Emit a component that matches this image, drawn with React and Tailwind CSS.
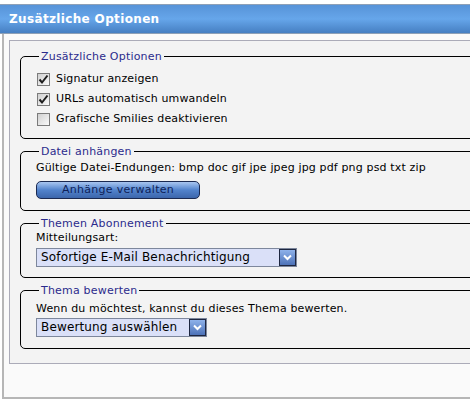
import React from 'react';

const font = { fontFamily: '"DejaVu Sans", Verdana, sans-serif' };

function Checkbox({ checked }) {
  return (
    <span className="flex h-[13px] w-[13px] items-center justify-center border border-[#7b7b7b] bg-gradient-to-br from-[#d0d0d0] to-[#fafafa]">
      {checked && (
        <svg width="11" height="11" viewBox="0 0 11 11">
          <path d="M1.5 5.5 L4 8.5 L9.5 1.5" fill="none" stroke="#202020" strokeWidth="2" />
        </svg>
      )}
    </span>
  );
}

function SelectBox({ label, width }) {
  return (
    <div className={`flex h-[19px] items-stretch border border-[#7d879c] bg-[#dae0f8] ${width}`}>
      <span className="flex-1 pl-[4px] text-[12px] leading-[17px] tracking-[0.15px] text-black">{label}</span>
      <span className="flex w-[17px] items-center justify-center border border-[#1d2640] bg-gradient-to-b from-[#8fb2ea] to-[#4d72b8]">
        <svg width="9" height="7" viewBox="0 0 9 7">
          <path d="M1 1.5 L4.5 5 L8 1.5" fill="none" stroke="#ffffff" strokeWidth="2" />
        </svg>
      </span>
    </div>
  );
}

function Group({ title, children, className = '' }) {
  return (
    <fieldset className={`rounded-[5px] border border-black pl-[15px] ${className}`}>
      <legend className="ml-[3px] px-[2px] text-[11px] leading-[13px] tracking-[0.2px] text-[#2b2b8c]">{title}</legend>
      {children}
    </fieldset>
  );
}

export default function App() {
  const options = [
    { label: 'Signatur anzeigen', checked: true },
    { label: 'URLs automatisch umwandeln', checked: true },
    { label: 'Grafische Smilies deaktivieren', checked: false },
  ];

  return (
    <div className="h-[403px] w-[470px] overflow-hidden bg-white pt-[4px] text-[11px] tracking-[0.15px] text-black" style={font}>
      {/* Header bar */}
      <div className="flex h-[30px] w-[490px] items-center border-y border-[#8ea0b6] bg-gradient-to-b from-[#5793d8] via-[#66a6ea] to-[#467fc2] pl-[9px]">
        <span className="text-[12px] font-bold tracking-[0.35px] text-white">Zusätzliche Optionen</span>
      </div>

      {/* Outer frame */}
      <div className="ml-[2px] h-[365px] w-[490px] border-b-2 border-l-2 border-[#b6b6b6] bg-[#fafafa] pl-[5px] pt-[6px]">
        <div className="flex h-[324px] flex-col gap-[6px] border border-[#ababb8] bg-[#f3f3f3] pl-[10px] pt-[9px]">
          <Group title="Zusätzliche Optionen" className="pb-[9px] pt-[6px]">
            {options.map((o) => (
              <div key={o.label} className="flex h-[20px] items-center gap-[6px] pl-[1px]">
                <Checkbox checked={o.checked} />
                <span>{o.label}</span>
              </div>
            ))}
          </Group>

          <Group title="Datei anhängen" className="pb-[11px] pt-[3px]">
            <div className="leading-[14px]">Gültige Datei-Endungen: bmp doc gif jpe jpeg jpg pdf png psd txt zip</div>
            <div className="mt-[6px] flex h-[18px] w-[164px] items-center justify-center rounded-[5px] border border-[#1b2a52] bg-gradient-to-b from-[#a9c6f0] via-[#5283cc] to-[#3c66ac] text-[11px] tracking-[0.3px] text-[#0f1f58]">
              Anhänge verwalten
            </div>
          </Group>

          <Group title="Themen Abonnement" className="pb-[10px] pt-[1px]">
            <div className="leading-[14px]">Mitteilungsart:</div>
            <div className="mt-[3px]">
              <SelectBox label="Sofortige E-Mail Benachrichtigung" width="w-[261px]" />
            </div>
          </Group>

          <Group title="Thema bewerten" className="pb-[11px] pt-[5px]">
            <div className="leading-[14px]">Wenn du möchtest, kannst du dieses Thema bewerten.</div>
            <div className="mt-[2px]">
              <SelectBox label="Bewertung auswählen" width="w-[171px]" />
            </div>
          </Group>
        </div>
      </div>
    </div>
  );
}
